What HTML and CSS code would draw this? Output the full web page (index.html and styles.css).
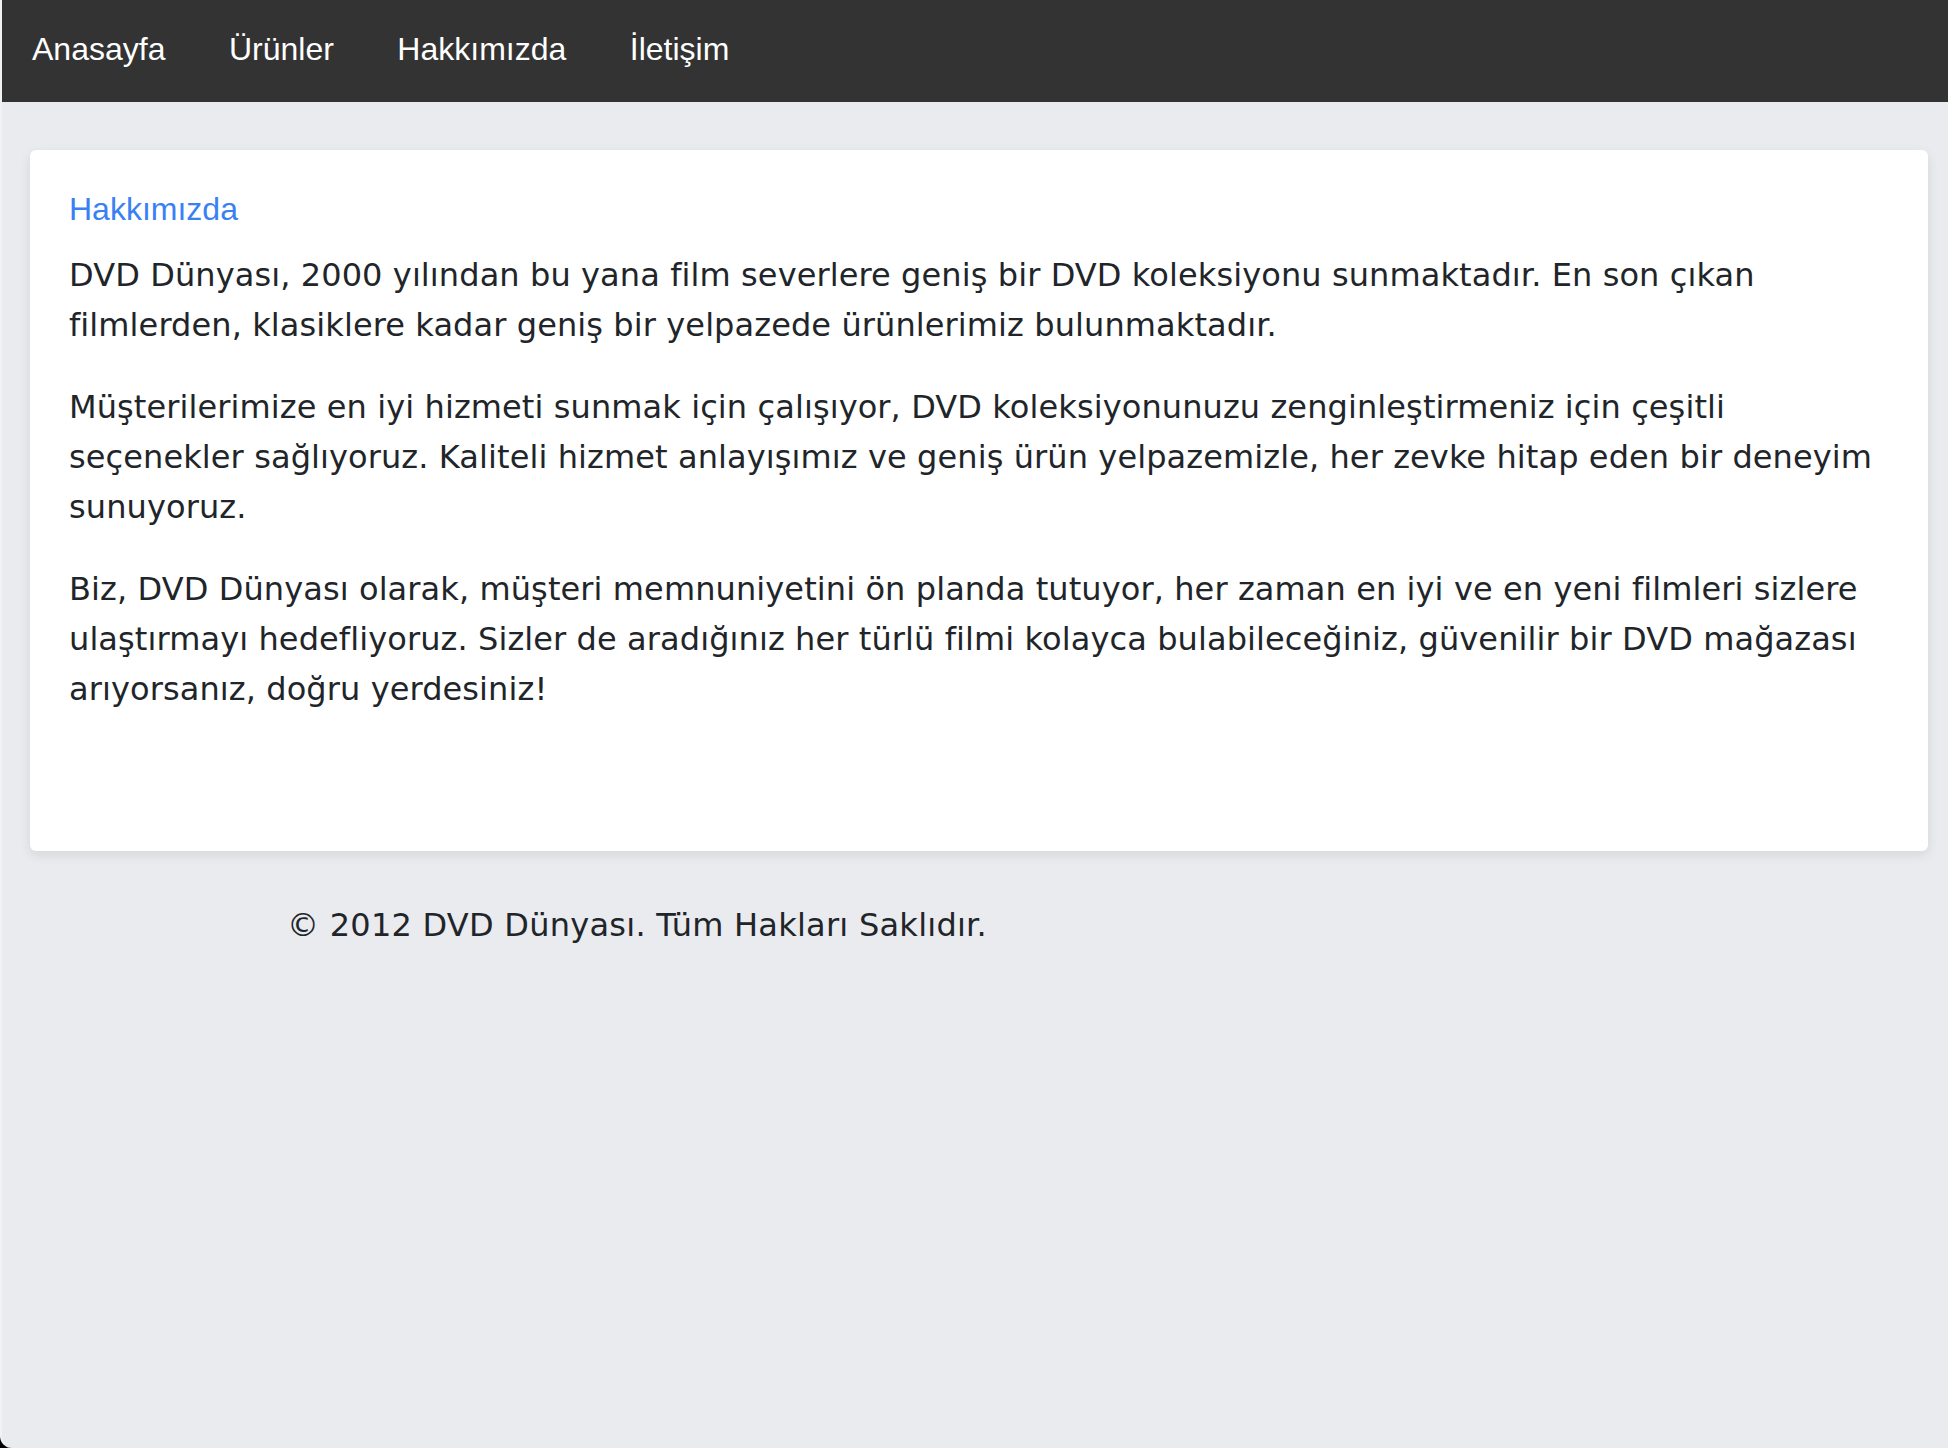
FILE: index.html
```html
<!DOCTYPE html>
<html lang="tr">
<head>
<meta charset="utf-8">
<title>Hakkımızda - DVD Dünyası</title>
<link rel="stylesheet" href="styles.css">
</head>
<body>
<nav class="navbar">
  <a class="nav-link" href="#">Anasayfa</a>
  <a class="nav-link" href="#">Ürünler</a>
  <a class="nav-link" href="#">Hakkımızda</a>
  <a class="nav-link" href="#">İletişim</a>
</nav>
<main class="page">
  <section class="card">
    <h2 class="card-title">Hakkımızda</h2>
    <p class="card-text">DVD Dünyası, 2000 yılından bu yana film severlere geniş bir DVD koleksiyonu sunmaktadır. En son çıkan filmlerden, klasiklere kadar geniş bir yelpazede ürünlerimiz bulunmaktadır.</p>
    <p class="card-text">Müşterilerimize en iyi hizmeti sunmak için çalışıyor, DVD koleksiyonunuzu zenginleştirmeniz için çeşitli seçenekler sağlıyoruz. Kaliteli hizmet anlayışımız ve geniş ürün yelpazemizle, her zevke hitap eden bir deneyim sunuyoruz.</p>
    <p class="card-text">Biz, DVD Dünyası olarak, müşteri memnuniyetini ön planda tutuyor, her zaman en iyi ve en yeni filmleri sizlere ulaştırmayı hedefliyoruz. Sizler de aradığınız her türlü filmi kolayca bulabileceğiniz, güvenilir bir DVD mağazası arıyorsanız, doğru yerdesiniz!</p>
  </section>
</main>
<footer class="footer">
  <p class="footer-text">© 2012 DVD Dünyası. Tüm Hakları Saklıdır.</p>
</footer>
</body>
</html>
```

FILE: styles.css
```css
html, body {
  margin: 0;
  padding: 0;
}

html {
  background: #000000;
}

body {
  min-height: 1448px;
  background: #eaebef;
  color: #212529;
  font-family: "DejaVu Sans", Verdana, sans-serif;
  border-left: 2px solid #f1f2f4;
  border-bottom-left-radius: 12px;
  box-sizing: border-box;
}

.navbar {
  display: flex;
  align-items: center;
  gap: 2.5px;
  height: 102px;
  margin-left: -2px;
  border-left: 2px solid #262626;
  padding-bottom: 3px;
  box-sizing: border-box;
  background: #333333;
}

.nav-link {
  font-family: "Liberation Sans", Arial, sans-serif;
  font-size: 32px;
  color: #ffffff;
  text-decoration: none;
  padding: 0 31px 0 30px;
}

.page {
  padding: 48px 20px 0 28px;
}

.card {
  background: #ffffff;
  border-radius: 6px;
  box-shadow: 0 4px 12px rgba(0, 0, 0, 0.09);
  padding: 41px 39px 105px 39px;
}

.card-title {
  margin: 0 0 22px 0;
  font-family: "Liberation Sans", Arial, sans-serif;
  font-size: 32px;
  font-weight: normal;
  line-height: 37px;
  color: #3a80f5;
}

.card-text {
  margin: 0 0 32px 0;
  font-size: 32px;
  line-height: 50px;
  letter-spacing: 0.1px;
}

.footer {
  padding: 56px 0 0 285px;
}

.footer-text {
  margin: 0;
  font-size: 32px;
  line-height: 37px;
  letter-spacing: 0.25px;
}
```
